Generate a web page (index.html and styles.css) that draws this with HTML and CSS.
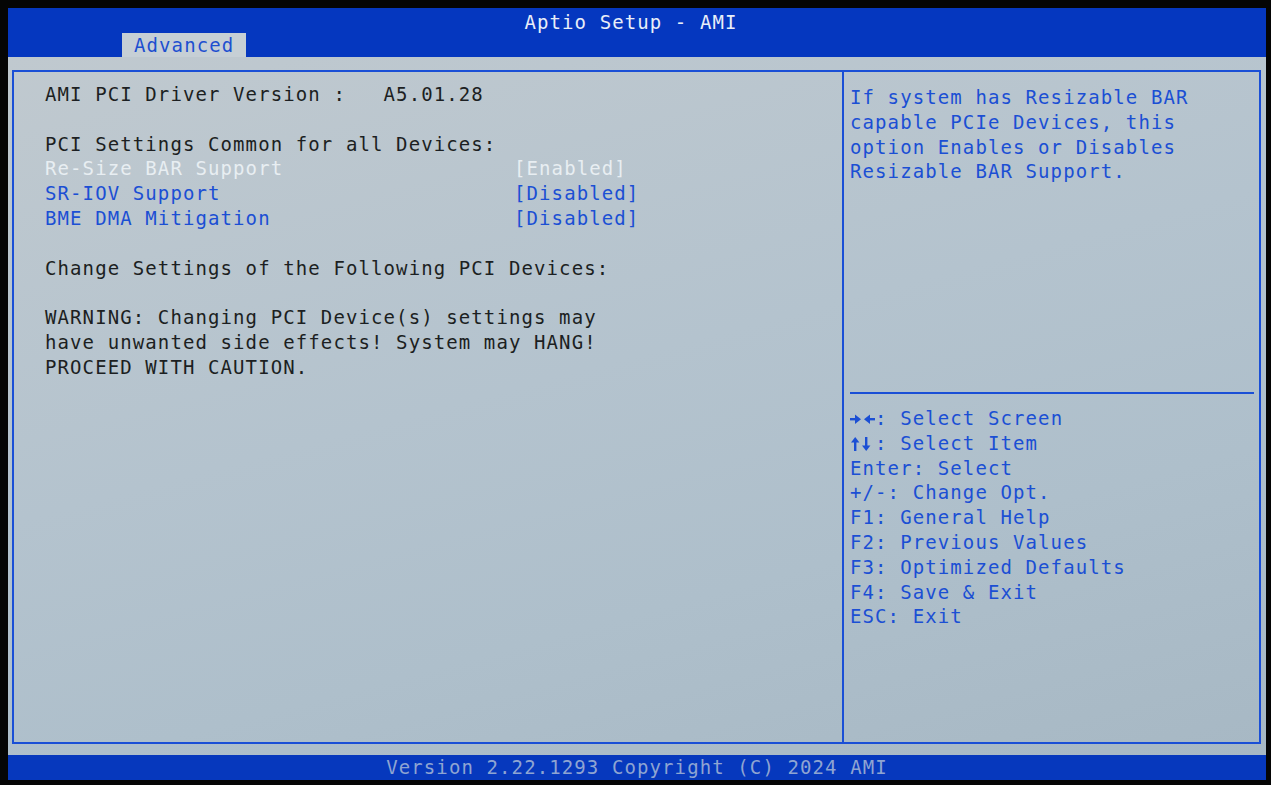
FILE: index.html
```html
<!DOCTYPE html>
<html lang="en">
<head>
  <meta charset="UTF-8" />
  <title>Aptio Setup - AMI</title>
  <meta name="viewport" content="width=device-width, initial-scale=1.0"/>
  <link rel="stylesheet" href="styles.css">
</head>
<body>
  <div class="screen">
    <header class="top">
      <div class="title">Aptio Setup - AMI</div>
      <div class="tab">Advanced</div>
    </header>

    <main class="main">
      <div class="frame">
        <section class="settings">
          <p class="line plain">AMI PCI Driver Version :   A5.01.28</p>
          <p class="line"></p>
          <p class="line plain">PCI Settings Common for all Devices:</p>
          <div class="row selected">
            <span class="label">Re-Size BAR Support</span>
            <span class="value">[Enabled]</span>
          </div>
          <div class="row">
            <span class="label">SR-IOV Support</span>
            <span class="value">[Disabled]</span>
          </div>
          <div class="row">
            <span class="label">BME DMA Mitigation</span>
            <span class="value">[Disabled]</span>
          </div>
          <p class="line"></p>
          <p class="line plain">Change Settings of the Following PCI Devices:</p>
          <p class="line"></p>
          <p class="line plain">WARNING: Changing PCI Device(s) settings may</p>
          <p class="line plain">have unwanted side effects! System may HANG!</p>
          <p class="line plain">PROCEED WITH CAUTION.</p>
        </section>

        <aside class="side">
          <div class="help">
            <p class="line">If system has Resizable BAR</p>
            <p class="line">capable PCIe Devices, this</p>
            <p class="line">option Enables or Disables</p>
            <p class="line">Resizable BAR Support.</p>
          </div>
          <div class="keys">
            <p class="line"><svg class="arrows" viewBox="0 0 25 16" aria-label="→←"><rect x="0" y="7" width="7" height="2.4"/><polygon points="5,3.5 11,8.2 5,12.9"/><polygon points="20,3.5 14,8.2 20,12.9"/><rect x="18" y="7" width="7" height="2.4"/></svg>: Select Screen</p>
            <p class="line"><svg class="arrows" viewBox="0 0 25 16" aria-label="↑↓"><polygon points="1,6.5 5.2,1 9.4,6.5"/><rect x="4" y="5" width="2.4" height="10"/><rect x="15" y="1" width="2.4" height="10"/><polygon points="12,9.5 16.2,15 20.4,9.5"/></svg>: Select Item</p>
            <p class="line">Enter: Select</p>
            <p class="line">+/-: Change Opt.</p>
            <p class="line">F1: General Help</p>
            <p class="line">F2: Previous Values</p>
            <p class="line">F3: Optimized Defaults</p>
            <p class="line">F4: Save &amp; Exit</p>
            <p class="line">ESC: Exit</p>
          </div>
        </aside>
      </div>
    </main>

    <footer class="bottom">Version 2.22.1293 Copyright (C) 2024 AMI</footer>
  </div>
</body>
</html>
```

FILE: styles.css
```css
html, body {
  margin: 0;
  height: 100%;
}
body {
  background: #050505;
  font-family: "DejaVu Sans Mono", "Liberation Mono", monospace;
  font-size: 19px;
  letter-spacing: 1.1px;
  color: #1c1f22;
  overflow: hidden;
}
p {
  margin: 0;
}
.screen {
  margin: 8px 5px 0 8px;
  height: 772px;
  display: flex;
  flex-direction: column;
}

/* header */
.top {
  height: 49px;
  background: #0537bf;
  display: flex;
  flex-direction: column;
}
.title {
  height: 22px;
  padding: 3px 12px 0 0;
  line-height: 22px;
  text-align: center;
  color: #e9eef8;
}
.tab {
  align-self: flex-start;
  margin-left: 114px;
  padding: 0 12px;
  height: 24px;
  line-height: 24px;
  background: #c6cfd5;
  color: #1d4fd0;
}

/* main area */
.main {
  height: 698px;
  box-sizing: border-box;
  padding: 13px 5px 11px 4px;
  background: linear-gradient(165deg, #c0c9cf 0%, #b4c3ce 45%, #aebfcb 70%, #a7b8c4 100%);
}
.frame {
  height: 674px;
  box-sizing: border-box;
  border: 2px solid #1a4fd6;
  display: flex;
}
.line {
  height: 24.8px;
  line-height: 24.8px;
  white-space: pre;
}
.settings {
  width: 828px;
  box-sizing: border-box;
  padding: 10px 0 0 31px;
}
.plain {
  color: #1c1f22;
}
.row {
  display: flex;
  height: 24.8px;
  line-height: 24.8px;
  color: #1b4fd4;
  white-space: pre;
}
.row .label {
  width: 469px;
}
.row.selected {
  color: #e8eef2;
}

/* help column */
.side {
  flex: 1;
  border-left: 2px solid #1a4fd6;
  display: flex;
  flex-direction: column;
  color: #1b4fd4;
}
.help {
  height: 322px;
  box-sizing: border-box;
  padding-top: 13px;
  border-bottom: 2px solid #1a4fd6;
  margin: 0 5px 0 6px;
}
.keys {
  padding: 12px 0 0 6px;
}
.arrows {
  width: 25px;
  height: 16px;
  margin-right: 0.1px;
  vertical-align: -2px;
  fill: #1b4fd4;
}

/* footer */
.bottom {
  height: 25px;
  line-height: 25px;
  background: #0638bd;
  color: #8ea4d2;
  text-align: center;
}
```
